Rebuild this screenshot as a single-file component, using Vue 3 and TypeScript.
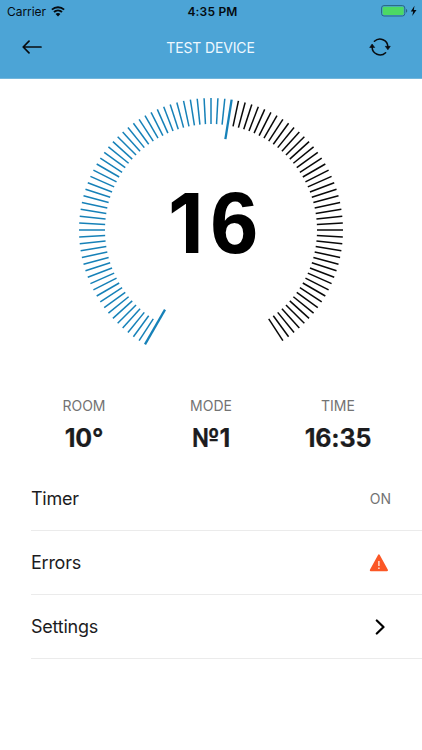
<script setup lang="ts">
interface Tick {
  angle: number
  active: boolean
  long: boolean
}

const value = 16
const digits = String(value).split('')
const tickCount = 100
const currentTick = 53

const ticks: Tick[] = Array.from({ length: tickCount }, (_, i) => ({
  angle: 210 + i * 3,
  active: i <= currentTick,
  long: i === 0 || i === currentTick,
}))

const stats = [
  { label: 'ROOM', value: '10°' },
  { label: 'MODE', value: '№1' },
  { label: 'TIME', value: '16:35' },
]
</script>

<template>
  <div class="screen">
    <header class="header">
      <div class="status">
        <div class="carrier">
          <span>Carrier</span>
          <svg class="wifi" width="14" height="11" viewBox="0 0 14 11">
            <path d="M0.9 3.6C4.3 0.5 9.7 0.5 13.1 3.6M3 6C5.3 3.9 8.7 3.9 11 6" fill="none" stroke="#050b10" stroke-width="1.9" />
            <path d="M4.6 8C5.9 6.8 8.1 6.8 9.4 8L7 10.4Z" fill="#050b10" />
          </svg>
        </div>
        <span class="clock">4:35 PM</span>
        <svg class="battery" width="37" height="12" viewBox="0 0 37 12">
          <rect x="0.6" y="0.6" width="23.2" height="10.4" rx="2.4" fill="none" stroke="#286583" stroke-width="1" />
          <rect x="1.7" y="1.7" width="21" height="8.2" rx="1.3" fill="#4cd964" />
          <path d="M25 4C26.6 4.2 26.6 7.4 25 7.6Z" fill="#286583" />
          <path d="M33.5 0.8L29.8 6.6H32.2L31.2 11L35.5 4.9H32.8Z" fill="#050b10" />
        </svg>
      </div>
      <nav class="nav">
        <svg class="back" width="20" height="14" viewBox="0 0 20 14">
          <path d="M19 7H1.4M7 1.2L1.2 7L7 12.8" fill="none" stroke="#080c10" stroke-width="1.7" stroke-linecap="round" stroke-linejoin="round" />
        </svg>
        <h1 class="title">TEST DEVICE</h1>
        <svg class="refresh" width="22" height="20" viewBox="0 0 22 20">
          <path d="M5.4 4.3A8 8 0 0 1 18.9 10M16.6 15.7A8 8 0 0 1 3.1 10" fill="none" stroke="#080c10" stroke-width="1.5" stroke-linecap="round" />
          <path d="M16.3 9.3H21.3L18.9 12.8ZM0.7 10.5H5.7L3.1 7Z" fill="#080c10" stroke="#080c10" stroke-width="0.6" stroke-linejoin="round" />
        </svg>
      </nav>
    </header>

    <section class="dial">
      <svg class="gauge" width="270" height="270" viewBox="-135 -135 270 270">
        <line
          v-for="tick in ticks"
          :key="tick.angle"
          :class="['tick', { active: tick.active, long: tick.long }]"
          x1="0"
          y1="-132"
          x2="0"
          :y2="tick.long ? -92 : -106"
          :transform="`rotate(${tick.angle})`"
        />
      </svg>
      <div class="value">
        <span v-for="(digit, i) in digits" :key="i" :class="['digit', { one: digit === '1' }]">{{ digit }}</span>
      </div>
    </section>

    <section class="stats">
      <div v-for="stat in stats" :key="stat.label" class="stat">
        <span class="stat-label">{{ stat.label }}</span>
        <span class="stat-value">{{ stat.value }}</span>
      </div>
    </section>

    <ul class="menu">
      <li class="row">
        <span class="name">Timer</span>
        <span class="state">ON</span>
      </li>
      <li class="row">
        <span class="name">Errors</span>
        <svg class="warning" width="20" height="18" viewBox="0 0 20 18">
          <path d="M9.9 1.4L18 16.2H1.8Z" fill="#fb5726" stroke="#fb5726" stroke-width="2" stroke-linejoin="round" />
          <path d="M9.9 7V12M9.9 13.6V15" stroke="#ffe6dc" stroke-width="1.4" />
        </svg>
      </li>
      <li class="row">
        <span class="name">Settings</span>
        <svg class="chevron" width="11" height="16" viewBox="0 0 11 16">
          <path d="M1.8 1.5L8.5 8L1.8 14.5" fill="none" stroke="#000" stroke-width="2.2" stroke-linecap="round" stroke-linejoin="round" />
        </svg>
      </li>
    </ul>
  </div>
</template>

<style>
body {
  background: #fff;
}
</style>

<style scoped>
.screen {
  width: 422px;
  height: 750px;
  overflow: hidden;
  background: #fff;
  color: #1c1c1e;
  font-family: Inter, "Liberation Sans", sans-serif;
}

.header {
  height: 78px;
  background: #4ca4d6;
  border-bottom: 1px solid #72b6dc;
  box-sizing: content-box;
}

.status {
  display: grid;
  grid-template-columns: 1fr auto 1fr;
  align-items: center;
  height: 22px;
  padding: 0 4px 0 7px;
  color: #050b10;
  font-size: 12px;
}

.carrier {
  display: flex;
  align-items: center;
  gap: 5px;
  letter-spacing: -0.05px;
}

.clock {
  font-weight: 600;
  letter-spacing: 0.2px;
}

.battery {
  justify-self: end;
}

.nav {
  display: grid;
  grid-template-columns: 1fr auto 1fr;
  align-items: center;
  height: 50px;
  padding: 0 31px 0 22px;
}

.title {
  margin: 0 -8px 0 0;
  color: #eef8ff;
  font-size: 14px;
  font-weight: 400;
  letter-spacing: -0.15px;
}

.refresh {
  justify-self: end;
}

.dial {
  display: grid;
  place-items: center;
  height: 270px;
  padding-top: 16px;
}

.gauge,
.value {
  grid-area: 1 / 1;
}

.tick {
  stroke: #080808;
  stroke-width: 1.5;
}

.tick.active {
  stroke: #1681b8;
}

.tick.long {
  stroke-width: 2.3;
}

.value {
  display: flex;
  align-items: baseline;
  margin-bottom: 15px;
  color: #000;
  font-weight: 700;
  line-height: 1;
}

.digit {
  width: 46px;
  font-family: "Liberation Sans", Arial, sans-serif;
  font-size: 87px;
  line-height: 84px;
  text-align: center;
}

.digit.one {
  width: 40px;
  margin-right: 4px;
  font-family: Inter, sans-serif;
  font-size: 83px;
}

.stats {
  display: grid;
  grid-template-columns: repeat(3, 127px);
  justify-content: center;
  padding-top: 31px;
}

.stat {
  display: flex;
  flex-direction: column;
  align-items: center;
}

.stat-label {
  color: #737373;
  font-size: 14px;
  line-height: 20px;
}

.stat-value {
  margin-top: 5px;
  font-size: 25px;
  font-weight: 700;
  letter-spacing: -0.2px;
  line-height: 34px;
  -webkit-text-stroke: 0.2px #1c1c1e;
}

.menu {
  margin: 12px 0 0;
  padding: 0 0 0 31px;
  list-style: none;
}

.row {
  display: flex;
  align-items: center;
  justify-content: space-between;
  box-sizing: border-box;
  height: 64px;
  padding-right: 31px;
  border-bottom: 1px solid #ebebeb;
  font-size: 18px;
}

.name {
  letter-spacing: -0.25px;
}

.state {
  color: #737373;
  font-size: 14px;
}

.warning {
  margin-right: 2px;
}

.chevron {
  margin-right: 5px;
}
</style>
